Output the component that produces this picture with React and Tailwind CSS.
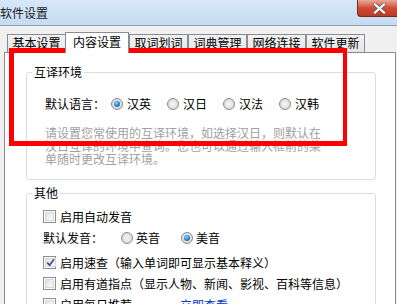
import React from "react";

function Radio({ checked }) {
  return (
    <span className="w-[12px] h-[12px] rounded-full border border-[#8c8c8c] bg-[radial-gradient(circle_at_50%_50%,#f4f4f4_0%,#e2e2e2_55%,#c9c9c9_100%)] flex items-center justify-center shrink-0">
      {checked && (
        <span className="w-[6px] h-[6px] rounded-full bg-[radial-gradient(circle_at_40%_35%,#8fd8ff_0%,#2a86d0_50%,#124f8f_100%)]" />
      )}
    </span>
  );
}

function Check({ checked }) {
  return (
    <span className="w-[13px] h-[13px] border border-[#8e8f8f] bg-white p-px flex shrink-0">
      <span className="flex-1 border border-[#d8d8d8] bg-gradient-to-br from-[#e2e2e2] to-[#fbfbfb] flex items-center justify-center">
        {checked && (
          <svg width="9" height="9" viewBox="0 0 9 9">
            <path d="M1.2 4.6 L3.6 7.2 L8 1.2" fill="none" stroke="#3b4f93" strokeWidth="1.7" />
          </svg>
        )}
      </span>
    </span>
  );
}

function Tab({ label, selected, className = "" }) {
  if (selected) {
    return (
      <div className={`relative z-10 h-[21px] -mb-px w-[64px] border border-b-0 border-[#898c95] bg-white flex items-start justify-center pt-[2px] leading-[14px] ${className}`}>
        {label}
      </div>
    );
  }
  return (
    <div className={`h-[18px] w-[59px] border border-b-0 border-[#898c95] bg-gradient-to-b from-[#f2f2f2] to-[#e5e5e5] flex items-start justify-center pt-[1px] leading-[14px] ${className}`}>
      {label}
    </div>
  );
}

export default function App() {
  return (
    <div className="relative w-[397px] h-[304px] overflow-hidden bg-[#f0f0f0] text-[12px] text-black [font-family:'Noto_Sans_CJK_SC','Noto_Sans',sans-serif]">
      {/* Title bar */}
      <div className="h-[26px] flex items-start justify-between bg-gradient-to-b from-[#d6e8f9] to-[#c4dbf1] border-b border-[#8a9cb1]">
        <span className="mt-[6px] leading-[14px] text-[12px] text-[#1b1b1b]">软件设置</span>
        <div className="w-[40px] h-[17px] rounded-bl-[4px] border border-t-0 border-r-0 border-[#7a2a1c] bg-gradient-to-b from-[#e9a898] via-[#cf4b34] to-[#b93a26] flex items-center pl-[15px]">
          <svg width="13" height="11" viewBox="0 0 13 11">
            <path d="M2 1.5 L11 9.5 M11 1.5 L2 9.5" stroke="#5a5a5a" strokeWidth="3.6" strokeLinecap="square" />
            <path d="M2 1.5 L11 9.5 M11 1.5 L2 9.5" stroke="#ffffff" strokeWidth="2.2" strokeLinecap="square" />
          </svg>
        </div>
      </div>

      {/* Tabs */}
      <div className="h-[26px] flex items-end pl-[7px]">
        <Tab label="基本设置" className="w-[58px]" />
        <Tab label="内容设置" selected className="-ml-px" />
        <Tab label="取词划词" />
        <Tab label="词典管理" />
        <Tab label="网络连接" />
        <Tab label="软件更新" />
      </div>

      {/* Panel */}
      <div className="ml-[4px] w-[392px] h-[260px] border border-[#898c95] bg-white pl-[21px]">
        {/* Group 1 */}
        <fieldset className="w-[350px] mt-[12px] border border-[#d5dfe5] rounded-[3px]">
          <legend className="ml-[5px] px-[2px] leading-[14px]">互译环境</legend>
          <div className="pl-[18px] pt-[17px] pb-[14px]">
            <div className="h-[16px] flex items-center">
              <span className="w-[66px]">默认语言：</span>
              <div className="flex items-center gap-[16px]">
                {["汉英", "汉日", "汉法", "汉韩"].map((t, i) => (
                  <div key={t} className="flex items-center gap-[4px]">
                    <Radio checked={i === 0} />
                    <span>{t}</span>
                  </div>
                ))}
              </div>
            </div>
            <p className="mt-[14px] leading-[13px] text-[#a0a0a0] whitespace-nowrap">
              请设置您常使用的互译环境，如选择汉日，则默认在
              <br />
              汉日互译的环境中查询。您也可以通过输入框前的菜
              <br />
              单随时更改互译环境。
            </p>
          </div>
        </fieldset>

        {/* Group 2 */}
        <fieldset className="w-[350px] mt-[6px] border border-[#d5dfe5] rounded-[3px]">
          <legend className="ml-[5px] px-[2px] leading-[14px]">其他</legend>
          <div className="pl-[16px] pt-[6px]">
            <div className="h-[21px] flex items-center gap-[4px]">
              <Check />
              <span>启用自动发音</span>
            </div>
            <div className="h-[21px] flex items-center">
              <span className="w-[78px]">默认发音：</span>
              <div className="flex items-center gap-[3px]">
                <Radio />
                <span>英音</span>
              </div>
              <div className="flex items-center gap-[3px] ml-[21px]">
                <Radio checked />
                <span>美音</span>
              </div>
            </div>
            <div className="h-[21px] mt-[4px] flex items-center gap-[4px]">
              <Check checked />
              <span>启用速查（输入单词即可显示基本释义）</span>
            </div>
            <div className="h-[21px] flex items-center gap-[4px]">
              <Check />
              <span>启用有道指点（显示人物、新闻、影视、百科等信息）</span>
            </div>
            <div className="h-[21px] flex items-center gap-[4px]">
              <Check />
              <span>启用每日推荐</span>
              <span className="ml-[44px] text-[#0033cc]">立即查看</span>
            </div>
          </div>
        </fieldset>
      </div>

      {/* Red annotation box */}
      <div className="absolute left-[9px] top-[48px] w-[338px] h-[98px] border-[5px] border-r-4 border-[#ff0000] pointer-events-none" />
    </div>
  );
}
